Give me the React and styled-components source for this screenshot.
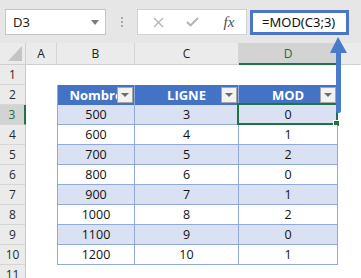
import React from "react";
import styled, { createGlobalStyle } from "styled-components";

const GlobalStyle = createGlobalStyle`
  body {
    margin: 0;
    background: #ffffff;
  }
`;

const Sheet = styled.div`
  position: relative;
  width: 361px;
  height: 278px;
  overflow: hidden;
  background: #ffffff;
  font-family: "Open Sans", "Liberation Sans", sans-serif;
`;

/* formula bar */

const FormulaBar = styled.div`
  display: flex;
  align-items: flex-start;
  height: 43px;
  padding-top: 9px;
  box-sizing: border-box;
  background: #e6e6e6;
`;

const NameBox = styled.div`
  display: flex;
  align-items: center;
  justify-content: space-between;
  box-sizing: border-box;
  width: 101px;
  height: 26px;
  margin-left: 5px;
  padding: 0 6px 0 7px;
  border: 1px solid #c6c6c6;
  background: #ffffff;
  font-family: "Noto Sans", sans-serif;
  font-size: 13px;
  color: #1e1e1e;
`;

const Caret = styled.span`
  width: 0;
  height: 0;
  border-left: 4px solid transparent;
  border-right: 4px solid transparent;
  border-top: 5px solid #7b7b7b;
`;

const Grip = styled.div`
  display: flex;
  flex-direction: column;
  align-items: center;
  justify-content: center;
  gap: 2px;
  width: 31px;
  height: 26px;

  span {
    width: 2px;
    height: 2px;
    background: #a9a9a9;
  }
`;

const FxGroup = styled.div`
  display: grid;
  grid-template-columns: 40px 28px 1fr;
  align-items: center;
  justify-items: center;
  box-sizing: border-box;
  width: 110px;
  height: 26px;
  border: 1px solid #d2d2d2;
  background: #ffffff;
`;

const Fx = styled.span`
  padding-left: 6px;
  font-family: "Liberation Serif", serif;
  font-style: italic;
  font-size: 15px;
  color: #4f4f4f;
`;

const FormulaInput = styled.div`
  box-sizing: border-box;
  width: 99px;
  height: 25px;
  margin: 1px 0 0 3px;
  padding-left: 9px;
  border: 3px solid #4a76c6;
  background: #ffffff;
  font-family: "Noto Sans", sans-serif;
  font-size: 13px;
  line-height: 18px;
  color: #111111;
`;

/* grid */

const Row = styled.div`
  display: flex;
  height: ${(p) => p.$h || 20}px;
`;

const Corner = styled.div`
  width: 26px;
  box-sizing: border-box;
  border-right: 1px solid #d0d0d0;
  border-bottom: 1px solid #cfcfcf;
  background: #ebebeb;
`;

const ColHead = styled.div`
  display: flex;
  align-items: center;
  justify-content: center;
  box-sizing: border-box;
  width: ${(p) => p.$w}px;
  border-right: 1px solid ${(p) => (p.$last ? "transparent" : "#d4d4d4")};
  border-bottom: ${(p) => (p.$active ? "2px solid #217346" : "1px solid #cfcfcf")};
  background: ${(p) => (p.$active ? "#d3d3d3" : "#ebebeb")};
  color: ${(p) => (p.$active ? "#1f6b41" : "#222222")};
  font-size: 12px;
  padding-top: ${(p) => (p.$active ? 1 : 0)}px;
`;

const RowHead = styled.div`
  display: flex;
  align-items: center;
  justify-content: center;
  box-sizing: border-box;
  width: 26px;
  border-right: ${(p) => (p.$active ? "2px solid #217346" : "1px solid #c8c8c8")};
  border-bottom: 1px solid #d6d6d6;
  background: ${(p) => (p.$active ? "#d3d3d3" : "#ebebeb")};
  color: ${(p) => (p.$active ? "#1f6b41" : "#2a2a2a")};
  font-size: 12px;
`;

const Blank = styled.div`
  width: ${(p) => p.$w}px;
`;

const HeadCell = styled.div`
  position: relative;
  display: flex;
  align-items: center;
  justify-content: center;
  box-sizing: border-box;
  width: ${(p) => p.$w}px;
  border-right: 1px solid #8ea9db;
  border-left: ${(p) => (p.$first ? "1px solid #8ea9db" : "none")};
  background: #4472c4;
  color: #ffffff;
  font-weight: 700;
  font-size: 13px;
  overflow: hidden;
  white-space: nowrap;
`;

const FilterBtn = styled.span`
  position: absolute;
  right: 1px;
  top: 2px;
  display: flex;
  align-items: center;
  justify-content: center;
  box-sizing: border-box;
  width: 16px;
  height: 16px;
  border: 1px solid #a6a6a6;
  background: #f2f2f2;

  &::after {
    content: "";
    border-left: 4px solid transparent;
    border-right: 4px solid transparent;
    border-top: 4px solid #6e6e6e;
  }
`;

const DataCell = styled.div`
  position: relative;
  display: flex;
  align-items: center;
  justify-content: center;
  box-sizing: border-box;
  width: ${(p) => p.$w}px;
  border-right: 1px solid #8ea9db;
  border-bottom: 1px solid #8ea9db;
  border-left: ${(p) => (p.$first ? "1px solid #8ea9db" : "none")};
  background: ${(p) => (p.$band ? "#d9e1f2" : "#ffffff")};
  color: #111111;
  font-size: 12.5px;
`;

const Selection = styled.span`
  position: absolute;
  left: -2px;
  top: -2px;
  right: -1px;
  bottom: -1px;
  border: 2px solid #217346;
  pointer-events: none;

  &::after {
    content: "";
    position: absolute;
    right: -4px;
    bottom: -4px;
    width: 5px;
    height: 5px;
    background: #217346;
    border: 1px solid #ffffff;
  }
`;

const Arrow = styled.svg`
  position: absolute;
  left: 328px;
  top: 35px;
`;

const widths = { a: 31, b: 78, c: 104, d: 99 };

const data = [
  [500, 3, 0],
  [600, 4, 1],
  [700, 5, 2],
  [800, 6, 0],
  [900, 7, 1],
  [1000, 8, 2],
  [1100, 9, 0],
  [1200, 10, 1],
];

export default function App() {
  return (
    <Sheet>
      <GlobalStyle />
      <FormulaBar>
        <NameBox>
          <span>D3</span>
          <Caret />
        </NameBox>
        <Grip>
          <span />
          <span />
          <span />
        </Grip>
        <FxGroup>
          <svg width="11" height="11" viewBox="0 0 11 11">
            <path d="M1 1 L10 10 M10 1 L1 10" stroke="#b5b5b5" strokeWidth="1.4" fill="none" />
          </svg>
          <svg width="13" height="10" viewBox="0 0 13 10">
            <path d="M1 5 L4.5 8.5 L12 1" stroke="#b0b0b0" strokeWidth="1.8" fill="none" />
          </svg>
          <Fx>fx</Fx>
        </FxGroup>
        <FormulaInput>=MOD(C3;3)</FormulaInput>
      </FormulaBar>

      <Row $h={22}>
        <Corner>
          <svg width="25" height="21" viewBox="0 0 25 21">
            <polygon points="22,3 22,18 8,18" fill="#c4c4c4" />
          </svg>
        </Corner>
        <ColHead $w={widths.a}>A</ColHead>
        <ColHead $w={78}>B</ColHead>
        <ColHead $w={104}>C</ColHead>
        <ColHead $w={99} $active>D</ColHead>
        <ColHead $w={23} $last />
      </Row>

      <Row>
        <RowHead>1</RowHead>
      </Row>

      <Row>
        <RowHead>2</RowHead>
        <Blank $w={widths.a} />
        <HeadCell $w={widths.b} $first>
          Nombre
          <FilterBtn />
        </HeadCell>
        <HeadCell $w={widths.c}>
          LIGNE
          <FilterBtn />
        </HeadCell>
        <HeadCell $w={widths.d}>
          MOD
          <FilterBtn />
        </HeadCell>
      </Row>

      {data.map((r, i) => {
        const n = i + 3;
        const band = n % 2 === 1;
        return (
          <Row key={n}>
            <RowHead $active={n === 3}>{n}</RowHead>
            <Blank $w={widths.a} />
            <DataCell $w={widths.b} $band={band} $first>
              {r[0]}
            </DataCell>
            <DataCell $w={widths.c} $band={band}>
              {r[1]}
            </DataCell>
            <DataCell $w={widths.d} $band={band}>
              {r[2]}
              {n === 3 && <Selection />}
            </DataCell>
          </Row>
        );
      })}

      <Row>
        <RowHead>11</RowHead>
      </Row>

      <Arrow width="22" height="82" viewBox="0 0 22 82">
        <polygon points="10,2 2,18 19,18" fill="#4a7acb" />
        <rect x="8" y="16" width="5" height="62" rx="2" fill="#4a7acb" />
      </Arrow>
    </Sheet>
  );
}
